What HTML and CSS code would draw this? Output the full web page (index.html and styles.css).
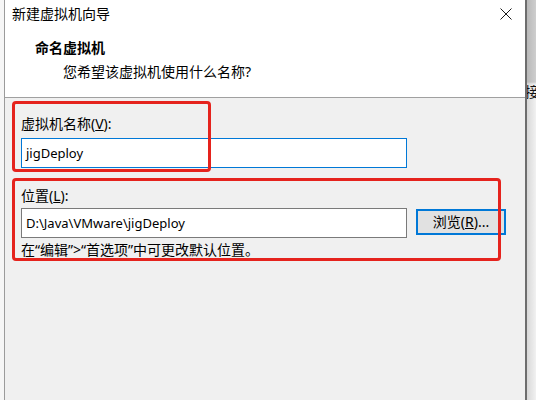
FILE: index.html
```html
<!DOCTYPE html>
<html lang="zh-CN">
<head>
<meta charset="utf-8">
<title>新建虚拟机向导</title>
<link rel="stylesheet" href="styles.css">
</head>
<body>
<div class="screen">
  <div class="edge-left"></div>
  <div class="dialog">
    <header class="header">
      <div class="titlebar">
        <span class="title">新建虚拟机向导</span>
        <svg class="close" width="12" height="12" viewBox="0 0 12 12"><path d="M0.5 0.5 L11.5 11.5 M11.5 0.5 L0.5 11.5" stroke="#1a1a1a" stroke-width="1" fill="none"/></svg>
      </div>
      <h1 class="heading">命名虚拟机</h1>
      <p class="subheading">您希望该虚拟机使用什么名称?</p>
    </header>
    <main class="body">
      <div class="label">虚拟机名称(<u>V</u>):</div>
      <div class="input focused">jigDeploy</div>
      <div class="label label-loc">位置(<u>L</u>):</div>
      <div class="row">
        <div class="input">D:\Java\VMware\jigDeploy</div>
        <button class="btn" type="button">浏览(<u>R</u>)...</button>
      </div>
      <p class="hint">在“编辑”&gt;“首选项”中可更改默认位置。</p>
      <div class="mark mark-name"></div>
      <div class="mark mark-loc"></div>
    </main>
  </div>
  <div class="outside"><span class="peek">接</span></div>
</div>
</body>
</html>
```

FILE: styles.css
```css
html, body {
  margin: 0;
  padding: 0;
}
body {
  background: #f0f0f0;
  font-family: "Noto Sans", "Noto Sans CJK SC", sans-serif;
  font-size: 14px;
  color: #000;
}
.screen {
  display: flex;
  width: 536px;
  height: 400px;
  overflow: hidden;
}
.edge-left {
  flex: none;
  width: 4px;
  background: #f6f6f6;
}
.dialog {
  flex: none;
  width: 520px;
  border-left: 1px solid #9b9b9b;
  border-right: 2px solid #6d6d6d;
  display: flex;
  flex-direction: column;
  background: #f0f0f0;
}
.header {
  height: 97px;
  background: #fff;
  border-bottom: 1px solid #a0a0a0;
  box-sizing: content-box;
}
.titlebar {
  height: 28px;
  display: flex;
  align-items: center;
  justify-content: space-between;
  padding: 0 13px 0 7px;
}
.title {
  line-height: 28px;
  color: #000;
}
.close {
  display: block;
}
.heading {
  margin: 10px 0 0 30px;
  font-size: 14px;
  font-weight: bold;
  line-height: 20px;
}
.subheading {
  margin: 4px 0 0 58px;
  line-height: 20px;
}
.body {
  position: relative;
  flex: 1;
  padding: 16px 0 0 16px;
}
.label {
  line-height: 20px;
}
.label-loc {
  margin-top: 18px;
}
.input {
  box-sizing: border-box;
  width: 386px;
  height: 30px;
  margin-top: 4px;
  padding: 0 4px;
  border: 1px solid #7a7a7a;
  background: #fff;
  font-size: 13px;
  line-height: 28px;
  white-space: nowrap;
}
.focused {
  border-color: #0078d7;
}
.row {
  display: flex;
  align-items: flex-start;
  gap: 9px;
  margin-top: 2px;
}
.row .input {
  margin-top: 0;
}
.btn {
  box-sizing: border-box;
  width: 90px;
  height: 26px;
  margin-top: 1px;
  padding: 0;
  border: 2px solid #0078d7;
  background: #e1e1e1;
  font-family: inherit;
  font-size: 14px;
  color: #000;
  line-height: 20px;
}
.hint {
  margin: 2px 0 0;
  line-height: 20px;
}
.mark {
  position: absolute;
  box-sizing: border-box;
  border: 3px solid #e5231d;
  border-radius: 4px;
}
.mark-name {
  left: 7px;
  top: 3px;
  width: 199px;
  height: 71px;
}
.mark-loc {
  left: 7px;
  top: 80px;
  width: 489px;
  height: 83px;
}
.outside {
  flex: 1;
  position: relative;
  overflow: hidden;
  background:
    linear-gradient(to right, rgba(0, 0, 0, 0.12), rgba(0, 0, 0, 0.02)),
    linear-gradient(to bottom, #d2d2d2 0, #d2d2d2 82px, #f6f6f6 84px, #f6f6f6 100%);
}
.peek {
  position: absolute;
  left: -2px;
  top: 82px;
  font-size: 14px;
  line-height: 20px;
  color: #111;
}
```
